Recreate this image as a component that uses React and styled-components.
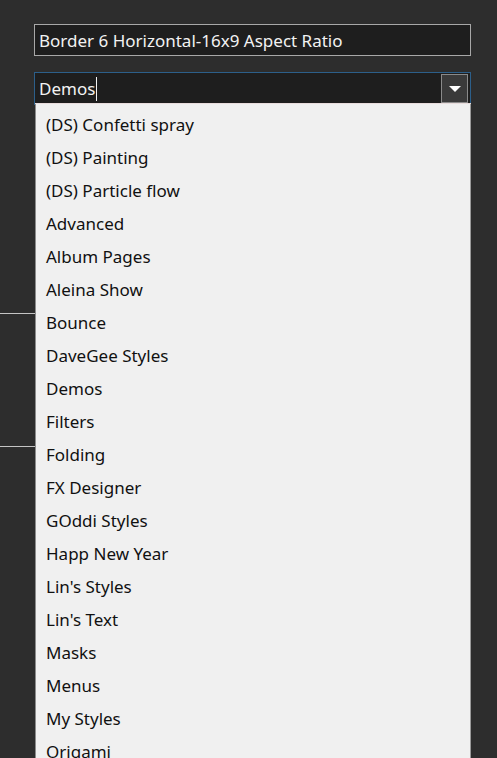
import React from "react";
import styled, { createGlobalStyle } from "styled-components";

const GlobalStyle = createGlobalStyle`
  html, body {
    margin: 0;
    background: #2d2d2d;
    overflow: hidden;
    height: 100%;
  }
  body {
    font-family: "Noto Sans", "Open Sans", sans-serif;
  }
`;

const Page = styled.div`
  height: 758px;
  display: flex;
  flex-direction: column;
  padding-top: 24px;
  box-sizing: border-box;
`;

const Fields = styled.div`
  display: flex;
  flex-direction: column;
  gap: 16px;
  padding: 0 26px 0 34px;
`;

const TextBox = styled.div`
  height: 32px;
  box-sizing: border-box;
  border: 1px solid #a8a8a8;
  background: #1e1e1e;
  color: #f2f2f2;
  font-size: 17px;
  line-height: 31px;
  padding-left: 4px;
  white-space: nowrap;
`;

const Combo = styled.div`
  position: relative;
  height: 33px;
  box-sizing: border-box;
  border: 1px solid #2c5f8a;
  background: #1e1e1e;
  display: flex;
  align-items: center;
  padding: 0 2px 0 4px;
`;

const ComboText = styled.div`
  flex: 1;
  color: #f2f2f2;
  font-size: 17px;
  line-height: 31px;
  display: flex;
  align-items: center;
`;

const Caret = styled.span`
  display: inline-block;
  width: 1px;
  height: 24px;
  background: #f2f2f2;
  margin-left: 1px;
`;

const ArrowButton = styled.div`
  width: 27px;
  height: 29px;
  box-sizing: border-box;
  border: 1px solid #8a8a8a;
  background: #3a3a3a;
  display: flex;
  align-items: center;
  justify-content: center;
`;

const Arrow = styled.div`
  width: 0;
  height: 0;
  border-left: 6px solid transparent;
  border-right: 6px solid transparent;
  border-top: 6px solid #ffffff;
`;

const List = styled.ul`
  position: absolute;
  top: 100%;
  left: 0;
  right: -1px;
  margin: 0;
  padding: 4px 0 0;
  list-style: none;
  background: #f0f0f0;
  border-left: 1px solid #8c8c8c;
  border-right: 1px solid #9a9a9a;
  box-shadow: 0 -1px 0 #e8dcdc;
  z-index: 10;
`;

const Item = styled.li`
  height: 33px;
  line-height: 33px;
  padding-left: 10px;
  font-size: 17px;
  color: #111;
  white-space: nowrap;
`;

const Section = styled.div`
  height: ${(p) => p.h}px;
`;

const Rule = styled.div`
  width: 40px;
  height: 1px;
  background: #c4c4c4;
`;

const items = [
  "(DS) Confetti spray",
  "(DS) Painting",
  "(DS) Particle flow",
  "Advanced",
  "Album Pages",
  "Aleina Show",
  "Bounce",
  "DaveGee Styles",
  "Demos",
  "Filters",
  "Folding",
  "FX Designer",
  "GOddi Styles",
  "Happ New Year",
  "Lin's Styles",
  "Lin's Text",
  "Masks",
  "Menus",
  "My Styles",
  "Origami",
];

export default function App() {
  return (
    <>
      <GlobalStyle />
      <Page>
        <Fields>
          <TextBox>Border 6 Horizontal-16x9 Aspect Ratio</TextBox>
          <Combo>
            <ComboText>
              Demos
              <Caret />
            </ComboText>
            <ArrowButton>
              <Arrow />
            </ArrowButton>
            <List>
              {items.map((name) => (
                <Item key={name}>{name}</Item>
              ))}
            </List>
          </Combo>
        </Fields>
        <Section h={208} />
        <Section h={133}>
          <Rule />
        </Section>
        <Section h={200}>
          <Rule />
        </Section>
      </Page>
    </>
  );
}
